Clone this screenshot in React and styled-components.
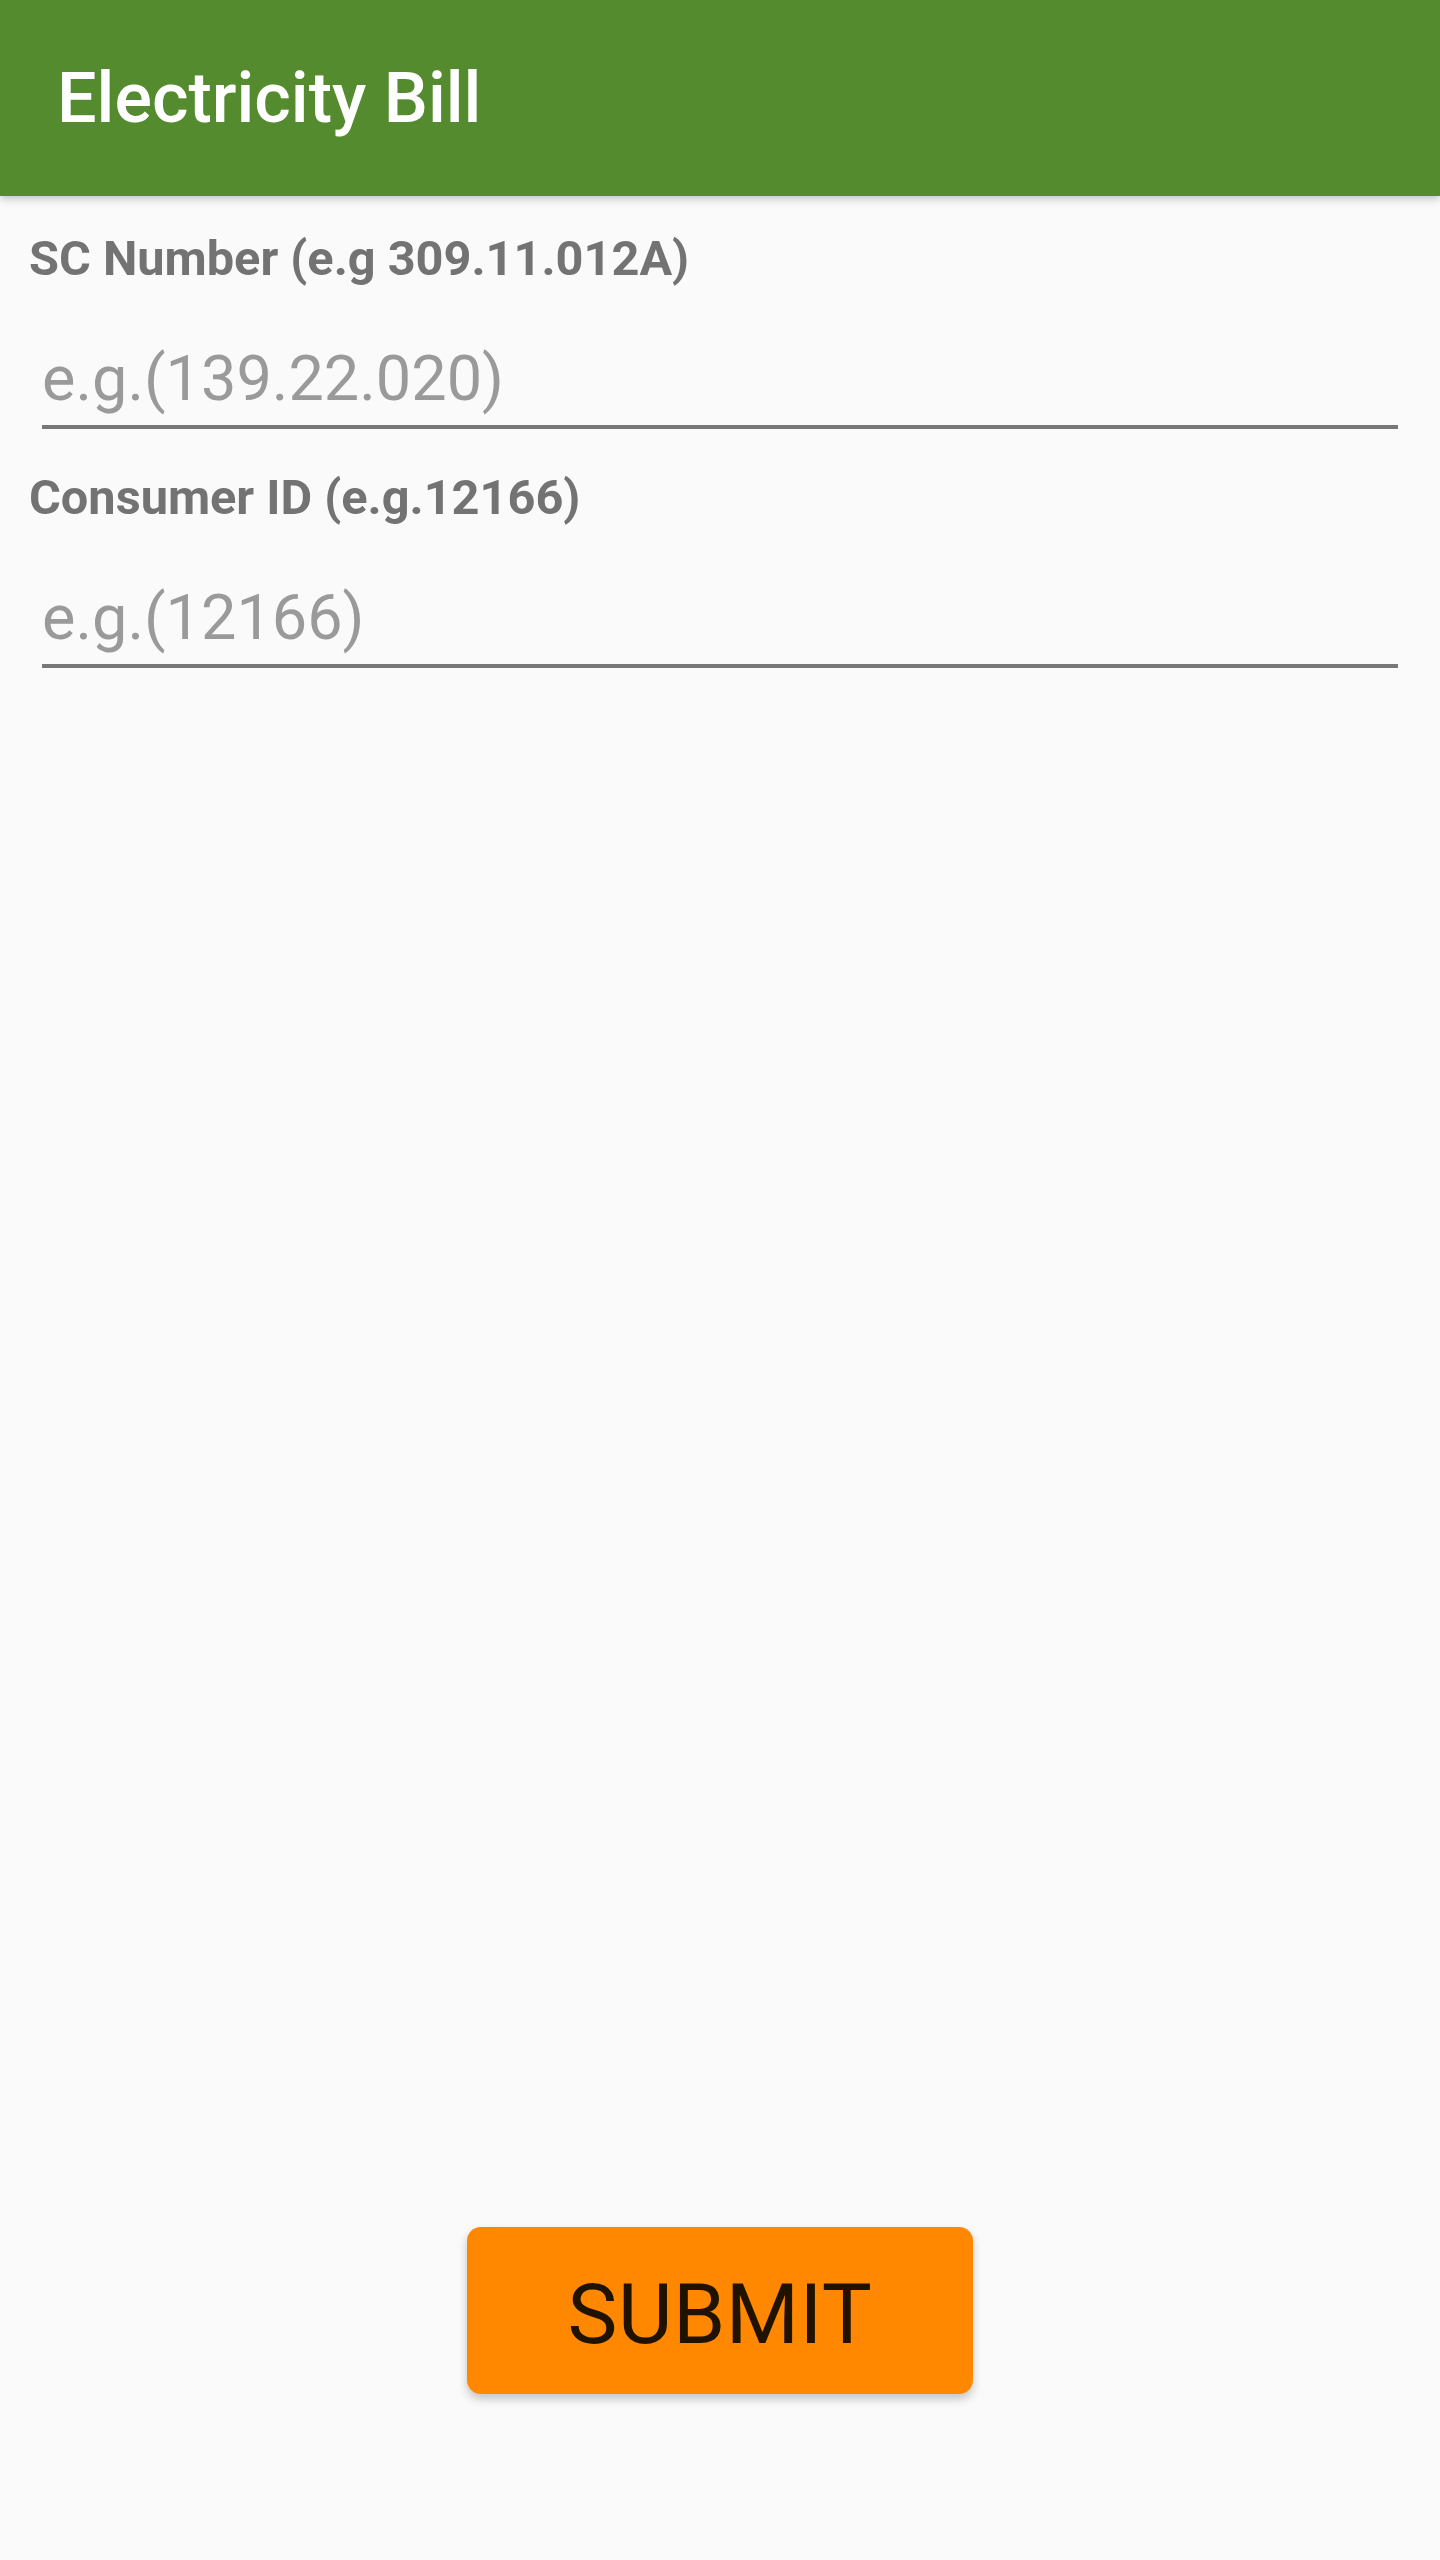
import React from "react";
import styled, { createGlobalStyle } from "styled-components";

const GlobalStyle = createGlobalStyle`
    html, body {
        margin: 0;
        padding: 0;
        background: #fafafa;
    }
    body {
        font-family: Roboto, "Noto Sans", "Liberation Sans", sans-serif;
    }
`;

const Screen = styled.div`
    display: flex;
    flex-direction: column;
    min-height: 100vh;
    background: #fafafa;
`;

const AppBar = styled.header`
    height: 196px;
    background: #558b2f;
    display: flex;
    align-items: center;
    padding: 0 57px;
    box-shadow: 0 3px 8px rgba(0, 0, 0, 0.22);
    position: relative;
    z-index: 1;
`;

const Title = styled.h1`
    margin: 0;
    color: #ffffff;
    font-size: 70px;
    font-weight: 500;
    line-height: 1;
`;

const Form = styled.main`
    flex: 1;
    display: flex;
    flex-direction: column;
    padding-top: 34px;
`;

const Label = styled.label`
    display: block;
    margin: ${(p) => (p.$first ? "0" : "40px")} 0 0 29px;
    font-size: 48.7px;
    line-height: 57px;
    font-weight: 700;
    color: #737373;
`;

const Input = styled.input`
    display: block;
    box-sizing: content-box;
    margin: 0 42px;
    padding: 55px 0 9px 0;
    height: 74px;
    width: calc(100% - 84px);
    border: none;
    border-bottom: 4px solid #777777;
    background: transparent;
    font-family: inherit;
    font-size: 63px;
    line-height: 74px;
    color: #212121;
    outline: none;

    &::placeholder {
        color: #9a9a9a;
    }
`;

const Footer = styled.div`
    display: flex;
    justify-content: center;
    padding-bottom: 166px;
`;

const SubmitButton = styled.button`
    width: 506px;
    height: 167px;
    padding: 8px 0 0 0;
    border: none;
    border-radius: 14px;
    background: #ff8800;
    color: #1f1300;
    font-family: inherit;
    font-size: 84px;
    font-weight: 400;
    letter-spacing: 0.5px;
    box-shadow: 0 5px 10px rgba(0, 0, 0, 0.22);
    cursor: pointer;
`;

export default function App() {
    return (
        <Screen>
            <GlobalStyle />
            <AppBar>
                <Title>Electricity Bill</Title>
            </AppBar>
            <Form>
                <Label $first htmlFor="sc">SC Number (e.g 309.11.012A)</Label>
                <Input id="sc" placeholder="e.g.(139.22.020)" />
                <Label htmlFor="cid">Consumer ID (e.g.12166)</Label>
                <Input id="cid" placeholder="e.g.(12166)" />
            </Form>
            <Footer>
                <SubmitButton>SUBMIT</SubmitButton>
            </Footer>
        </Screen>
    );
}
